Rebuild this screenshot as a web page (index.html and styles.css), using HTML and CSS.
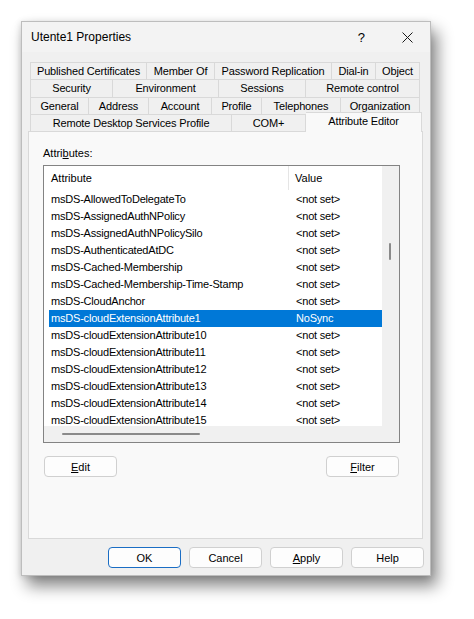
FILE: index.html
```html
<!DOCTYPE html>
<html>
<head>
<meta charset="utf-8">
<link rel="stylesheet" href="styles.css">
</head>
<body>
<div class="dialog">
  <div class="titlebar">
    <span class="title">Utente1 Properties</span>
    <span class="help">?</span>
    <svg class="close" width="11" height="11" viewBox="0 0 11 11"><path d="M0.5 0.5 L10.5 10.5 M10.5 0.5 L0.5 10.5" stroke="#1a1a1a" stroke-width="1" fill="none"/></svg>
  </div>
  <div class="tabs">
    <div class="tabrow r1">
      <div class="tab" style="width:117px">Published Certificates</div>
      <div class="tab" style="width:68px">Member Of</div>
      <div class="tab" style="width:117px">Password Replication</div>
      <div class="tab" style="width:44px">Dial-in</div>
      <div class="tab" style="width:44px">Object</div>
    </div>
    <div class="tabrow r2">
      <div class="tab" style="width:83px">Security</div>
      <div class="tab" style="width:106px">Environment</div>
      <div class="tab" style="width:87px">Sessions</div>
      <div class="tab" style="width:114px">Remote control</div>
    </div>
    <div class="tabrow r3">
      <div class="tab" style="width:59px">General</div>
      <div class="tab" style="width:60px">Address</div>
      <div class="tab" style="width:63px">Account</div>
      <div class="tab" style="width:50px">Profile</div>
      <div class="tab" style="width:79px">Telephones</div>
      <div class="tab" style="width:79px">Organization</div>
    </div>
    <div class="tabrow r4">
      <div class="tab" style="width:202px">Remote Desktop Services Profile</div>
      <div class="tab" style="width:74px">COM+</div>
      <div class="tab selected" style="width:116px">Attribute Editor</div>
    </div>
  </div>
  <div class="panel">
    <div class="label">Attri<u>b</u>utes:</div>
    <div class="listbox">
      <div class="listmain">
        <div class="header">
          <div class="hcol1">Attribute</div>
          <div class="hcol2">Value</div>
        </div>
        <div class="rows">
          <div class="row"><span class="c1">msDS-AllowedToDelegateTo</span><span class="c2">&lt;not set&gt;</span></div>
          <div class="row"><span class="c1">msDS-AssignedAuthNPolicy</span><span class="c2">&lt;not set&gt;</span></div>
          <div class="row"><span class="c1">msDS-AssignedAuthNPolicySilo</span><span class="c2">&lt;not set&gt;</span></div>
          <div class="row"><span class="c1">msDS-AuthenticatedAtDC</span><span class="c2">&lt;not set&gt;</span></div>
          <div class="row"><span class="c1">msDS-Cached-Membership</span><span class="c2">&lt;not set&gt;</span></div>
          <div class="row"><span class="c1">msDS-Cached-Membership-Time-Stamp</span><span class="c2">&lt;not set&gt;</span></div>
          <div class="row"><span class="c1">msDS-CloudAnchor</span><span class="c2">&lt;not set&gt;</span></div>
          <div class="row sel"><span class="c1">msDS-cloudExtensionAttribute1</span><span class="c2">NoSync</span></div>
          <div class="row"><span class="c1">msDS-cloudExtensionAttribute10</span><span class="c2">&lt;not set&gt;</span></div>
          <div class="row"><span class="c1">msDS-cloudExtensionAttribute11</span><span class="c2">&lt;not set&gt;</span></div>
          <div class="row"><span class="c1">msDS-cloudExtensionAttribute12</span><span class="c2">&lt;not set&gt;</span></div>
          <div class="row"><span class="c1">msDS-cloudExtensionAttribute13</span><span class="c2">&lt;not set&gt;</span></div>
          <div class="row"><span class="c1">msDS-cloudExtensionAttribute14</span><span class="c2">&lt;not set&gt;</span></div>
          <div class="row"><span class="c1">msDS-cloudExtensionAttribute15</span><span class="c2">&lt;not set&gt;</span></div>
        </div>
      </div>
      <div class="vscroll"><div class="vthumb"></div></div>
      <div class="hscroll"><div class="hthumb"></div></div>
      <div class="corner"></div>
    </div>
    <div class="panelbtns">
      <button class="btn"><u>E</u>dit</button>
      <button class="btn"><u>F</u>ilter</button>
    </div>
  </div>
  <div class="footer">
    <button class="btn default">OK</button>
    <button class="btn">Cancel</button>
    <button class="btn"><u>A</u>pply</button>
    <button class="btn">Help</button>
  </div>
</div>
</body>
</html>
```
FILE: styles.css
```css
html, body {
  margin: 0;
  padding: 0;
}
body {
  width: 474px;
  height: 619px;
  overflow: hidden;
  background: #ffffff;
  font-family: "Liberation Sans", Arial, sans-serif;
  font-size: 11px;
  color: #000;
}
.dialog {
  margin: 21px 0 0 21px;
  width: 410px;
  box-sizing: border-box;
  border: 1px solid #bdbdbd;
  background: #f0f0f0;
  box-shadow: 6px 10px 15px rgba(0, 0, 0, 0.48), -1px 1px 6px rgba(0, 0, 0, 0.12);
  display: flex;
  flex-direction: column;
}
.titlebar {
  height: 30px;
  background: #f3f3f3;
  display: flex;
  align-items: center;
  padding-left: 9px;
  font-size: 12px;
}
.title {
  flex: 1;
}
.help {
  font-size: 13px;
  margin-right: 37px;
}
.close {
  margin-right: 17px;
  display: block;
}
.tabs {
  margin-top: 10px;
  margin-left: 8px;
  display: flex;
  flex-direction: column;
  letter-spacing: -0.15px;
}
.tabrow {
  display: flex;
  height: 17px;
}
.tabrow.r2 {
  height: 18px;
}
.tabrow.r4 {
  align-items: flex-start;
}
.tab {
  box-sizing: border-box;
  height: 100%;
  border-top: 1px solid #d9d9d9;
  border-right: 1px solid #d9d9d9;
  background: #f0f0f0;
  display: flex;
  align-items: center;
  justify-content: center;
  white-space: nowrap;
  padding-bottom: 1px;
}
.tab:first-child {
  border-left: 1px solid #d9d9d9;
}
.tab.selected {
  height: 20px;
  margin-top: -2px;
  margin-bottom: -1px;
  background: #f9f9f9;
  border-left: none;
  position: relative;
  z-index: 1;
  padding-bottom: 3px;
}
.panel {
  margin-left: 6px;
  width: 395px;
  height: 408px;
  box-sizing: border-box;
  border: 1px solid #d9d9d9;
  background: #f9f9f9;
  padding: 15px 0 0 14px;
}
.label {
  line-height: 13px;
  height: 13px;
}
.listbox {
  margin-top: 5px;
  width: 357px;
  height: 278px;
  box-sizing: border-box;
  border: 1px solid #838383;
  background: #fff;
  display: grid;
  grid-template-columns: 338px 17px;
  grid-template-rows: 260px 16px;
}
.listmain {
  overflow: hidden;
  background: #fff;
}
.header {
  height: 24px;
  display: flex;
  align-items: stretch;
  line-height: 24px;
}
.hcol1 {
  width: 245px;
  box-sizing: border-box;
  padding-left: 7px;
  border-right: 1px solid #e5e5e5;
}
.hcol2 {
  padding-left: 6px;
}
.rows {
  display: flex;
  flex-direction: column;
  padding-top: 1px;
}
.row {
  height: 17px;
  line-height: 17px;
  margin-left: 5px;
  width: 333px;
  display: flex;
  white-space: nowrap;
  flex: none;
  letter-spacing: -0.2px;
}
.row.sel {
  background: #0078d7;
  color: #fff;
}
.c1 {
  width: 245px;
  padding-left: 2px;
  box-sizing: border-box;
}
.c2 {
  padding-left: 2px;
}
.vscroll {
  background: #f0f0f0;
  padding-top: 77px;
}
.vthumb {
  width: 2px;
  height: 17px;
  margin-left: 7px;
  background: #8a8a8a;
  border-radius: 1px;
}
.hscroll {
  background: #f0f0f0;
  padding-top: 7px;
}
.hthumb {
  width: 138px;
  height: 2px;
  margin-left: 18px;
  background: #8a8a8a;
  border-radius: 1px;
}
.corner {
  background: #f0f0f0;
}
.panelbtns {
  margin-top: 13px;
  width: 355px;
  margin-left: 1px;
  display: flex;
  justify-content: space-between;
}
.btn {
  width: 73px;
  height: 21px;
  box-sizing: border-box;
  border: 1px solid #d0d0d0;
  border-radius: 4px;
  background: #fdfdfd;
  font-family: "Liberation Sans", Arial, sans-serif;
  font-size: 11px;
  color: #000;
  padding: 0;
  margin: 0;
}
.btn.default {
  border-color: #1a6dc4;
}
.footer {
  margin-top: 8px;
  padding-right: 6px;
  padding-bottom: 7px;
  display: flex;
  justify-content: flex-end;
  gap: 8px;
}
```
